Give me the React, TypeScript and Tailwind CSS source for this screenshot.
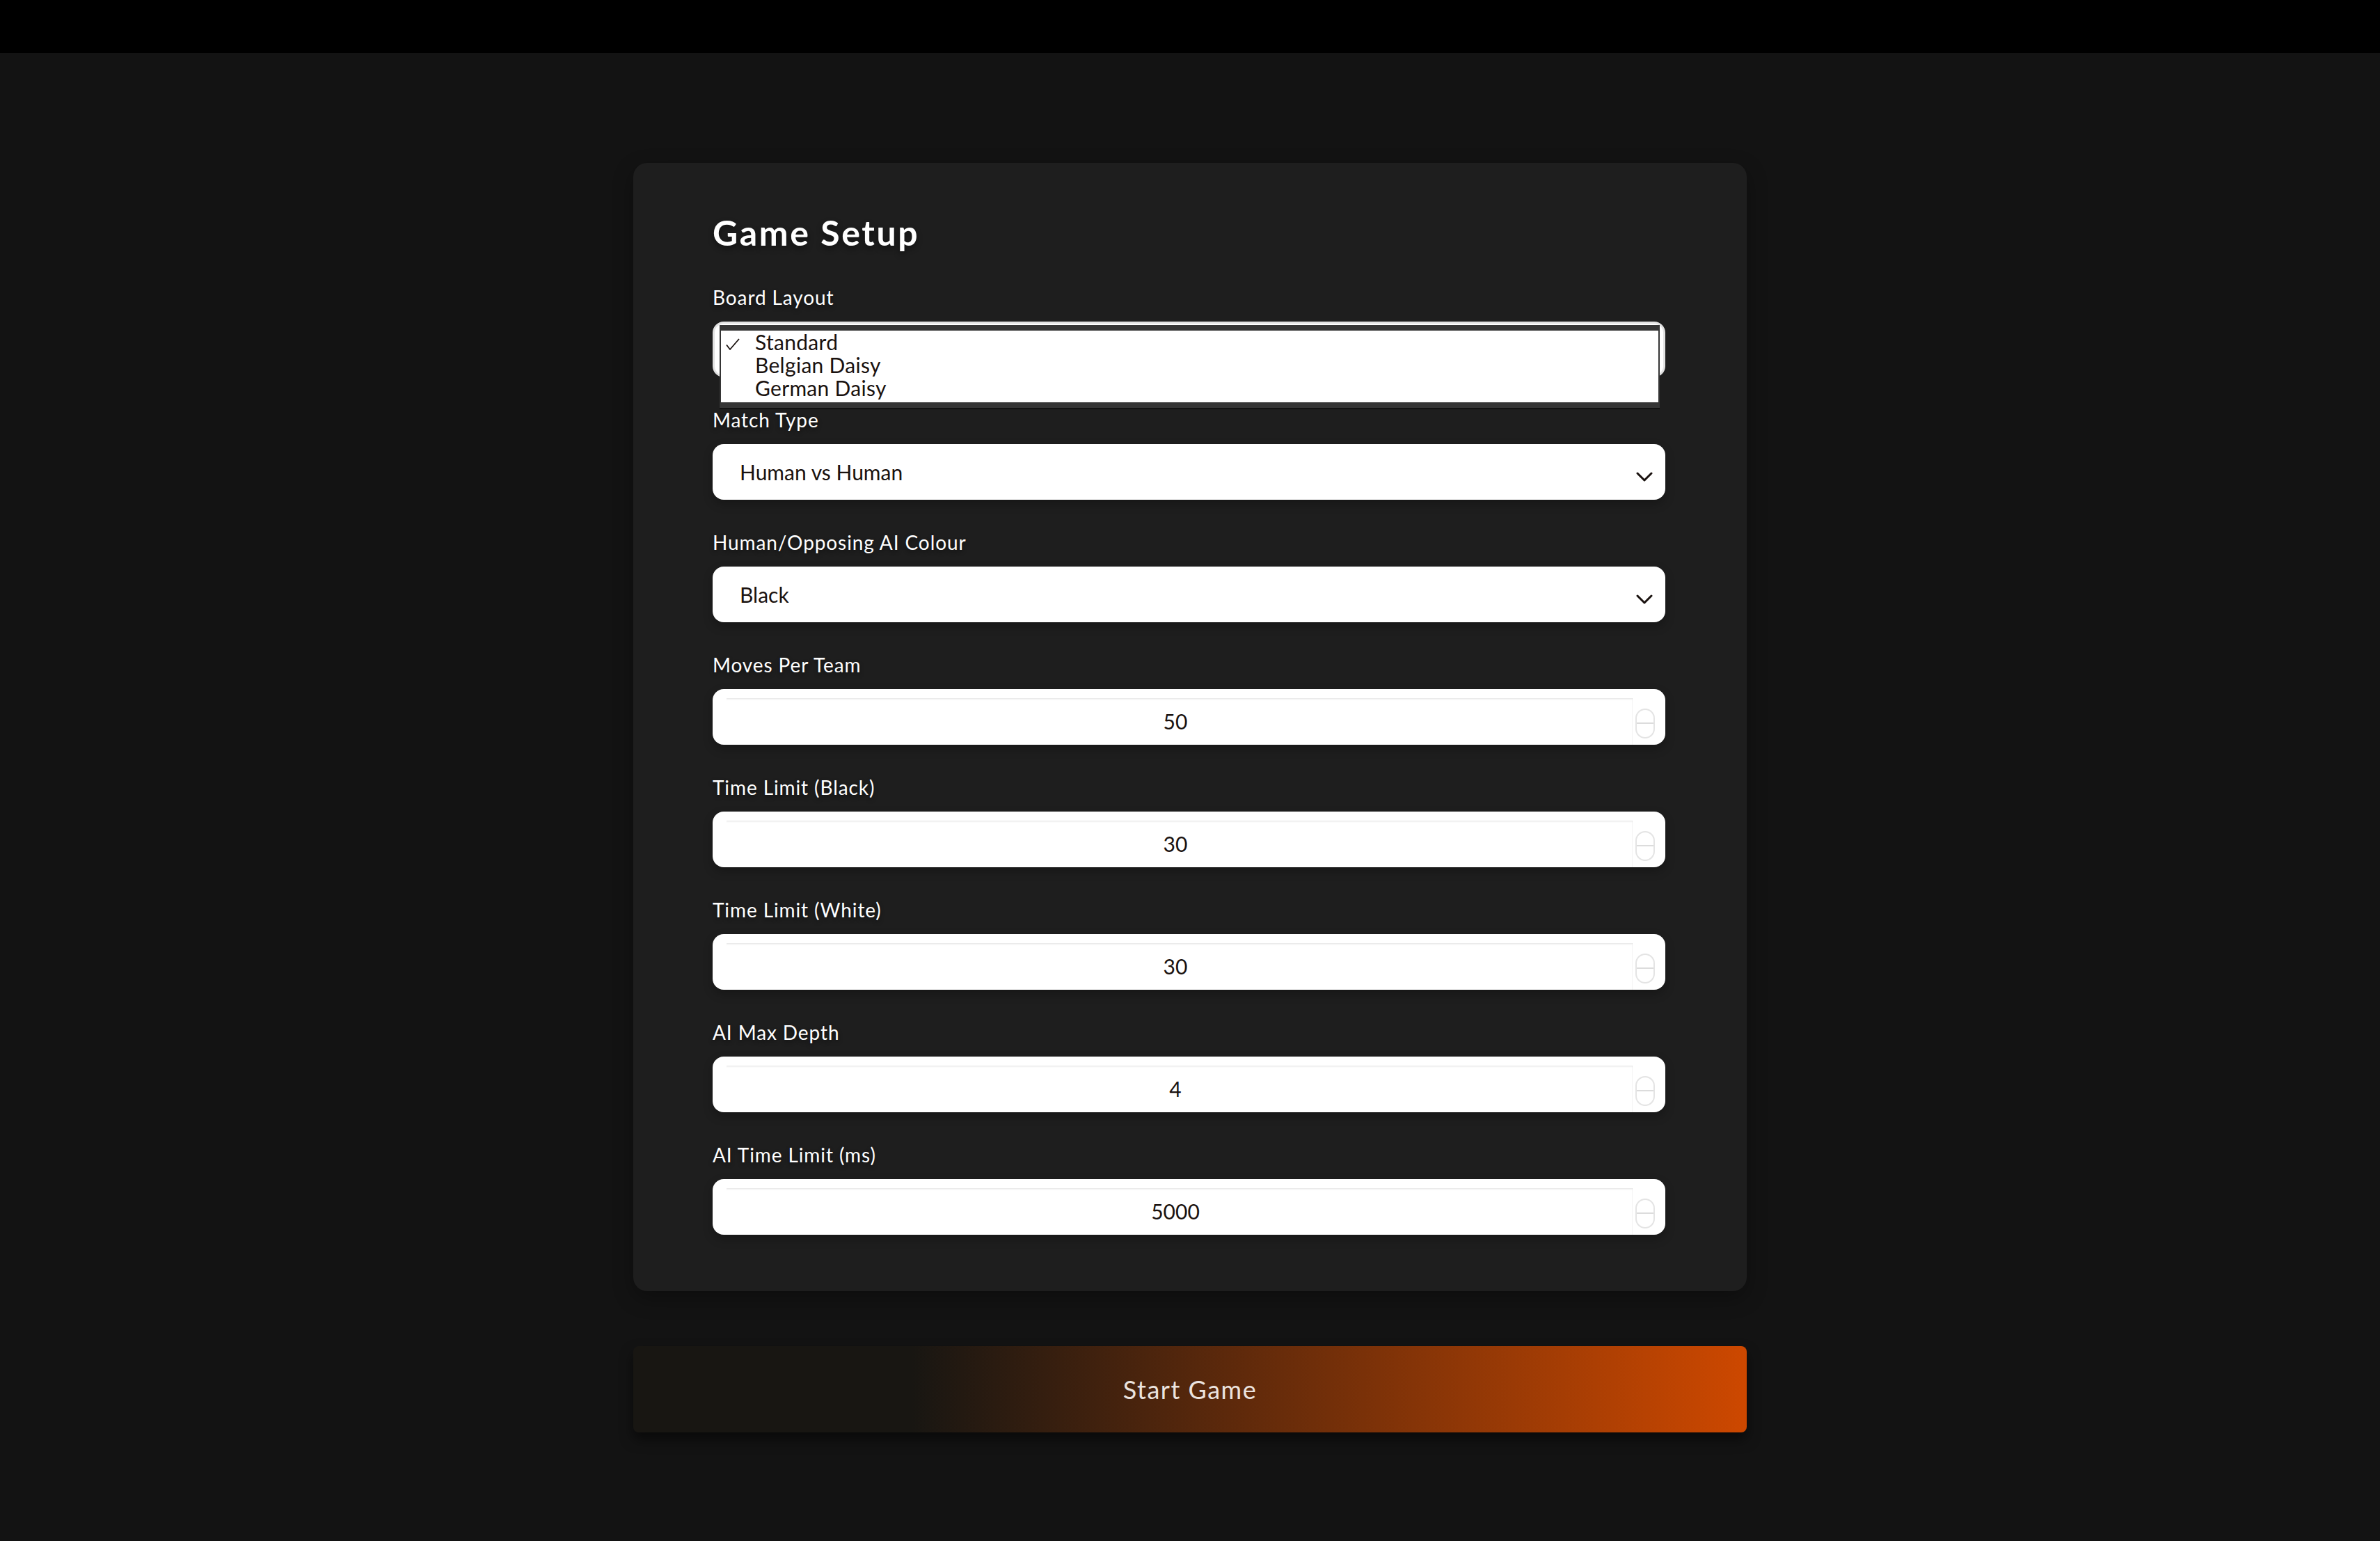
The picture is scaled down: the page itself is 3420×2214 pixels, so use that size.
import React from 'react';

const font = { fontFamily: 'Lato, "Noto Sans", sans-serif' };

const Chevron = () => (
  <svg width="24" height="14" viewBox="0 0 24 14" fill="none" className="mt-[14px]">
    <path d="M2 2l10 10L22 2" stroke="#1a120f" strokeWidth="3" strokeLinecap="round" strokeLinejoin="round" />
  </svg>
);

const Label = ({ children }: { children: React.ReactNode }) => (
  <div className="text-[28px] leading-[34px] tracking-[0.9px] text-white mb-[18px] [text-shadow:0_3px_6px_rgba(0,0,0,0.45)]">{children}</div>
);

const SelectBox = ({ value }: { value: string }) => (
  <div className="h-[80px] bg-white rounded-[16px] flex items-center justify-between pl-[39px] pr-[18px] shadow-[0_6px_14px_rgba(0,0,0,0.25)]">
    <span className="text-[30px] text-[#1a120f]">{value}</span>
    <Chevron />
  </div>
);

const NumberBox = ({ value }: { value: string }) => (
  <div className="h-[80px] bg-white rounded-[16px] flex pl-[20px] pr-[15px] pt-[13px] shadow-[0_6px_14px_rgba(0,0,0,0.25)]">
    <div className="flex-1 flex items-center justify-center pr-[12px] text-[30px] text-[#1a120f] shadow-[inset_0_3px_3px_-2px_rgba(0,0,0,0.12),inset_-1px_0_0_rgba(0,0,0,0.04)]">
      {value}
    </div>
    <div className="ml-[4px] self-center mt-[5px] w-[28px] h-[43px] rounded-[14px] border-2 border-[#e4e4e4] flex flex-col">
      <div className="flex-1 border-b-2 border-[#dcdcdc]" />
      <div className="flex-1" />
    </div>
  </div>
);

const BoardLayoutField = () => (
  <div>
    <Label>Board Layout</Label>
    <div className="relative h-[80px]">
      <div className="h-[80px] bg-white rounded-[16px] border-[3px] border-[#e2e2e2]" />
      {/* open native menu */}
      <div className="absolute left-[10px] right-[8px] top-[5px] bg-[#353535] pt-[8px] pb-[8px] px-[2px] shadow-[0_2px_0_#111]">
        <div className="bg-white pb-[4px]">
          {['Standard', 'Belgian Daisy', 'German Daisy'].map((o, i) => (
            <div key={o} className="flex items-center text-[30px] leading-[33px] tracking-[0.3px] text-[#1a120f]">
              <span className="w-[49px] pl-[7px] flex items-center">
                {i === 0 && (
                  <svg width="20" height="17" viewBox="0 0 20 17" fill="none" className="mt-[6px]">
                    <path d="M1 9.5l5 6.5L19 1" stroke="#1a120f" strokeWidth="1.8" strokeLinejoin="round" />
                  </svg>
                )}
              </span>
              {o}
            </div>
          ))}
        </div>
      </div>
    </div>
  </div>
);

const fields: { label: string; value: string; kind: 'select' | 'number' }[] = [
  { label: 'Match Type', value: 'Human vs Human', kind: 'select' },
  { label: 'Human/Opposing AI Colour', value: 'Black', kind: 'select' },
  { label: 'Moves Per Team', value: '50', kind: 'number' },
  { label: 'Time Limit (Black)', value: '30', kind: 'number' },
  { label: 'Time Limit (White)', value: '30', kind: 'number' },
  { label: 'AI Max Depth', value: '4', kind: 'number' },
  { label: 'AI Time Limit (ms)', value: '5000', kind: 'number' },
];

export default function App() {
  return (
    <div className="min-h-screen bg-[#131313] flex flex-col" style={font}>
      <div className="h-[76px] bg-black" />
      <main className="flex flex-col items-center pt-[158px] pb-[100px]">
        <div className="w-[1600px] bg-[#1e1e1e] rounded-[20px] pt-[70px] pb-[81px] pl-[114px] pr-[117px] shadow-[0_10px_30px_rgba(0,0,0,0.3)]">
          <h1 className="text-[50px] leading-[60px] font-bold tracking-[2.6px] text-white mb-[46px] [text-shadow:0_4px_8px_rgba(0,0,0,0.45)]">Game Setup</h1>
          <div className="flex flex-col gap-[44px]">
            <BoardLayoutField />
            {fields.map(f => (
              <div key={f.label}>
                <Label>{f.label}</Label>
                {f.kind === 'select' ? <SelectBox value={f.value} /> : <NumberBox value={f.value} />}
              </div>
            ))}
          </div>
        </div>
        <button className="mt-[79px] w-[1600px] h-[124px] rounded-[8px] bg-[linear-gradient(to_right,#181612_25%,#cd4800_100%)] text-[36px] tracking-[1.5px] text-[#ebe3df] shadow-[0_10px_18px_rgba(0,0,0,0.5)]">
          Start Game
        </button>
      </main>
    </div>
  );
}
